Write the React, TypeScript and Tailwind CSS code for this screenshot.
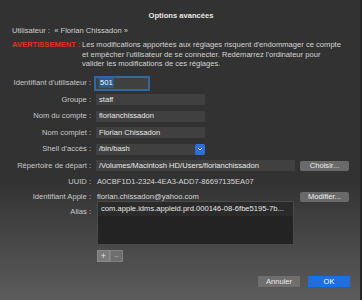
import React from "react";

const font = { fontFamily: "'Liberation Sans', Arial, sans-serif" };

function Label({ children }: { children: React.ReactNode }) {
  return <div className="w-[95px] shrink-0 text-right pr-[4px] text-[#c8c8c8] whitespace-nowrap">{children}</div>;
}

function Field({ w, children, focus }: { w: string; children?: React.ReactNode; focus?: boolean }) {
  return (
    <div
      className={`${w} h-[11px] flex items-center pl-[3px] bg-[#404040] text-[#e8e8e8] whitespace-nowrap overflow-hidden ${
        focus ? "outline outline-2 outline-[#2c6aa0] " : ""
      }`}
    >
      {children}
    </div>
  );
}

function Btn({ children }: { children: React.ReactNode }) {
  return (
    <div className="w-[49px] h-[10px] flex items-center justify-center rounded-[2px] bg-[#6a6a6a] text-[#ececec]">
      {children}
    </div>
  );
}

export default function App() {
  return (
    <div
      className="w-[362px] h-[300px] flex flex-col bg-gradient-to-b from-[#323232] from-60% to-[#5c5c5c] text-[7.6px] leading-[9.5px] text-[#d0d0d0] relative overflow-hidden"
      style={font}
    >
      <div className="absolute right-0 top-0 bottom-0 w-[2px] bg-[#262626]" />
      <div className="pt-[11px] text-center font-bold text-[#e6e6e6] text-[7.6px]">Options avancées</div>
      <div className="pl-[12px] pt-[5px] text-[#cfcfcf]">Utilisateur :&nbsp;&nbsp;« Florian Chissadon »</div>
      <div className="flex pl-[12px] pt-[5px]">
        <div className="w-[70px] shrink-0 font-bold text-[#e0302c] whitespace-nowrap">AVERTISSEMENT :</div>
        <div className="w-[268px] text-[#d4d4d4]">
          Les modifications apportées aux réglages risquent d'endommager ce compte
          <br />
          et empêcher l'utilisateur de se connecter. Redémarrez l'ordinateur pour
          <br />
          valider les modifications de ces réglages.
        </div>
      </div>

      <div className="flex flex-col pt-[9px] gap-[5.5px]">
        <div className="flex items-center">
          <Label>Identifiant d'utilisateur :</Label>
          <Field w="w-[52px] ml-[1px]" focus>
            <span className="bg-[#2a5b8c] text-white px-[1px]">501</span>
          </Field>
        </div>
        <div className="flex items-center">
          <Label>Groupe :</Label>
          <Field w="w-[109px] ml-[1px]">staff</Field>
        </div>
        <div className="flex items-center">
          <Label>Nom du compte :</Label>
          <Field w="w-[109px] ml-[1px]">florianchissadon</Field>
        </div>
        <div className="flex items-center">
          <Label>Nom complet :</Label>
          <Field w="w-[109px] ml-[1px]">Florian Chissadon</Field>
        </div>
        <div className="flex items-center">
          <Label>Shell d'accès :</Label>
          <div className="ml-[1px] w-[109px] h-[11px] flex items-center bg-[#404040] text-[#e8e8e8]">
            <div className="flex-1 pl-[3px]">/bin/bash</div>
            <div className="w-[10px] h-[11px] bg-[#2f6de0] rounded-[2px] flex items-center justify-center">
              <svg width="6" height="4" viewBox="0 0 6 4">
                <path d="M1 1 L3 3 L5 1" stroke="white" strokeWidth="1" fill="none" />
              </svg>
            </div>
          </div>
        </div>
        <div className="flex items-center">
          <Label>Répertoire de départ :</Label>
          <Field w="w-[199px] ml-[1px]">/Volumes/Macintosh HD/Users/florianchissadon</Field>
          <div className="ml-[5px]">
            <Btn>Choisir...</Btn>
          </div>
        </div>
        <div className="flex items-center">
          <Label>UUID :</Label>
          <div className="ml-[1px] pl-[1px] text-[#d8d8d8]">A0CBF1D1-2324-4EA3-ADD7-86697135EA07</div>
        </div>
        <div className="flex items-center">
          <Label>Identifiant Apple :</Label>
          <div className="ml-[1px] pl-[1px] w-[204px] text-[#d8d8d8]">florian.chissadon@yahoo.com</div>
          <Btn>Modifier...</Btn>
        </div>
        <div className="flex items-start">
          <Label>Alias :</Label>
          <div className="ml-[2px] -mt-[6px] w-[197px] h-[44px] bg-[#232323] border border-[#4a4a4a] flex flex-col">
            <div className="h-[14px] bg-[#2a2a2a] pl-[3px] flex items-center text-[#e8e8e8] whitespace-nowrap overflow-hidden">
              com.apple.idms.appleid.prd.000146-08-6fbe5195-7b...
            </div>
          </div>
        </div>
      </div>

      <div className="flex pl-[97px] pt-[5px]">
        <div className="w-[13px] h-[12px] bg-[#7a7a7a] border border-[#8a8a8a] flex items-center justify-center text-[#e6e6e6] text-[9px] leading-none">+</div>
        <div className="w-[13px] h-[12px] bg-[#6e6e6e] border border-[#808080] flex items-center justify-center text-[#a8a8a8] text-[9px] leading-none">−</div>
      </div>

      <div className="mt-auto flex justify-end gap-[8px] pr-[12px] pb-[13px]">
        <div className="w-[42px] h-[11px] bg-[#6f6f6f] rounded-[1px] flex items-center justify-center text-[#e6e6e6]">Annuler</div>
        <div className="w-[42px] h-[11px] bg-[#1f6fe0] rounded-[1px] flex items-center justify-center text-white">OK</div>
      </div>
    </div>
  );
}
